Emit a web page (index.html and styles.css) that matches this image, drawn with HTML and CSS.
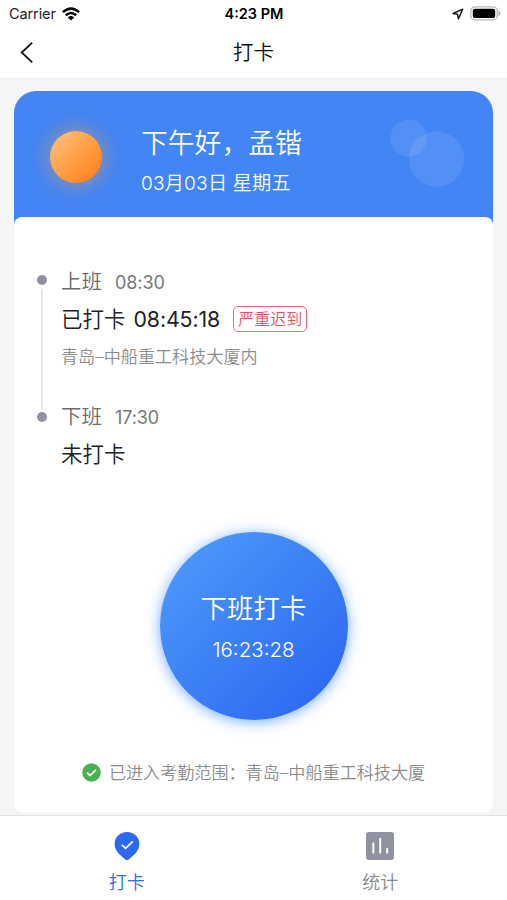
FILE: index.html
```html
<!DOCTYPE html>
<html lang="zh-CN">
<head>
<meta charset="utf-8">
<title>打卡</title>
<link rel="stylesheet" href="styles.css">
</head>
<body>
<div class="app">
  <header class="top">
    <div class="status">
      <div class="carrier"><span>Carrier</span>
        <svg width="18" height="14" viewBox="0 0 18 14"><g fill="none" stroke="#000" stroke-width="2.5"><path d="M.9 5.1Q9-1.9 17.1 5.1"/><path d="M3.8 8.2Q9 3.7 14.2 8.2"/></g><path d="M9 13.6 5.8 10.4Q9 7.8 12.2 10.4Z"/></svg>
      </div>
      <b class="clock">4:23 PM</b>
      <div class="indicators">
        <svg width="12" height="12" viewBox="0 0 12 12"><path d="M10.7 1.2 1 5.5l4.6.8.8 4.6Z" fill="none" stroke="#222" stroke-width="1.5" stroke-linejoin="round"/></svg>
        <svg width="31" height="15" viewBox="0 0 31 15"><rect x=".8" y=".8" width="26.4" height="13" rx="4" fill="#fff" stroke="#bbb" stroke-width="1.3"/><rect x="2.8" y="2.7" width="22.4" height="9.2" rx="2"/><path d="M28.5 5v5q2-.6 2-2.5t-2-2.5Z" fill="#aaa"/></svg>
      </div>
    </div>
    <div class="titlebar">
      <svg class="back" width="14" height="22" viewBox="0 0 14 22"><path d="M12.2 1.7 1.7 11.5l10.5 9.8" fill="none" stroke="#111" stroke-width="1.8"/></svg>
      <h1>打卡</h1>
    </div>
  </header>
  <main class="content">
    <section class="hero">
      <div class="sun"></div>
      <div class="greeting"><p class="hello">下午好，孟锴</p><p class="date">03月03日 星期五</p></div>
      <svg class="bubbles" width="76" height="68" viewBox="0 0 76 68" fill="#fff" fill-opacity=".09"><circle cx="18.5" cy="18" r="18.3"/><circle cx="46.5" cy="39" r="27.7"/></svg>
    </section>
    <section class="panel">
      <ol class="timeline">
        <li class="entry first">
          <div class="shift"><span>上班</span><span class="time">08:30</span></div>
          <div class="result"><span class="state">已打卡</span><span class="stamp">08:45:18</span><span class="tag">严重迟到</span></div>
          <div class="place">青岛–中船重工科技大厦内</div>
        </li>
        <li class="entry">
          <div class="shift"><span>下班</span><span class="time">17:30</span></div>
          <div class="result"><span class="state">未打卡</span></div>
        </li>
      </ol>
      <button class="punch"><span class="punch-name">下班打卡</span><span class="punch-time">16:23:28</span></button>
      <div class="range">
        <svg width="19" height="19" viewBox="0 0 19 19"><circle cx="9.5" cy="9.5" r="9.3" fill="#4caf50"/><path d="m5 9.6 3 3 6-5.8" fill="none" stroke="#fff" stroke-width="1.6"/></svg>
        <span>已进入考勤范围：青岛–中船重工科技大厦</span>
      </div>
    </section>
  </main>
  <nav class="tabs">
    <a class="tab active">
      <svg width="28" height="30" viewBox="0 0 28 30"><path d="M14 1C7 1 1.6 6.3 1.6 13c0 5 3.3 9 6.2 11.6l4.4 3.8q1.8 1.4 3.6 0l4.4-3.8C23 22 26.4 18 26.4 13 26.4 6.3 21 1 14 1Z" fill="#2d68ef"/><path d="m8.8 13.8 3.8 3.5 7.2-7" fill="none" stroke="#fff" stroke-width="1.7"/></svg>
      <span>打卡</span>
    </a>
    <a class="tab">
      <svg width="30" height="30" viewBox="0 0 30 30"><rect x="1" y="1" width="28" height="28" rx="3" fill="#9092a1"/><path d="M8.3 11.5v11M15.2 7v15.5M22.2 17v5.5" stroke="#fff" stroke-width="1.9"/></svg>
      <span>统计</span>
    </a>
  </nav>
</div>
</body>
</html>
```
FILE: styles.css
```css
* { box-sizing: border-box; margin: 0; padding: 0; }
body { font-family: Inter, "Noto Sans CJK SC", sans-serif; font-weight: 350; color: #222; background: #f5f5f5; }
svg { display: block; flex: none; }
.app { height: 900px; display: flex; flex-direction: column; overflow: hidden; }
.top { height: 79px; background: #fff; border-bottom: 1px solid #ededed; }
.status { height: 27px; display: grid; grid-template-columns: 1fr auto 1fr; align-items: center; padding: 0 8px 0 9px; font-size: 14.5px; font-weight: 400; }
.carrier { display: flex; align-items: center; gap: 6px; }
.carrier span { letter-spacing: -.1px; }
.clock { font-size: 14.5px; font-weight: 600; color: #000; }
.indicators { display: flex; align-items: center; justify-content: flex-end; gap: 6px; margin-right: -2px; }
.titlebar { height: 50px; display: grid; grid-template-columns: 1fr auto 1fr; align-items: center; padding: 0 20px; }
.titlebar h1 { grid-column: 2; padding-top: 2px; font-size: 20.5px; line-height: 30px; font-weight: 350; color: #111; }
.content { flex: 1; padding: 12px 14px 0; }
.hero { height: 132px; background: #4285f4; border-radius: 22px 22px 0 0; display: flex; padding: 0 27px 0 36px; }
.sun { width: 52px; height: 52px; margin: 40px 39px 0 0; flex: none; border-radius: 50%; background: linear-gradient(135deg, #ffc482, #ff7b0d); box-shadow: 0 0 22px rgba(255, 155, 65, .62); }
.greeting { color: #fff; white-space: nowrap; }
.hello { margin-top: 32px; font-size: 26.8px; line-height: 40px; }
.date { margin-top: 6px; font-size: 19.2px; line-height: 28px; letter-spacing: .15px; }
.bubbles { margin: 29px 0 0 auto; }
.panel { height: 595px; margin-top: -6px; background: #fff; border-radius: 8px; padding: 50px 23px 0; }
.timeline { list-style: none; }
.entry { position: relative; padding-left: 24px; height: 98px; }
.entry.first { height: 135px; }
.entry::before { content: ""; position: absolute; left: 0; top: 10px; width: 10px; height: 10px; border-radius: 50%; background: #9192a1; }
.entry.first::before { top: 8px; }
.entry.first::after { content: ""; position: absolute; left: 4px; top: 22px; width: 1.5px; height: 120px; background: #e8e8e8; }
.shift { display: flex; align-items: center; height: 30px; gap: 13px; font-size: 20.5px; line-height: 30px; color: #6c6c6c; }
.time { padding-top: 2px; font-size: 18px; font-weight: 400; color: #777; letter-spacing: -.1px; }
.result { display: flex; align-items: center; height: 36px; margin-top: 3px; color: #222; }
.state { padding-bottom: 2px; font-size: 21.5px; }
.stamp { padding-top: 1px; font-size: 21.3px; margin-left: 8px; font-weight: 400; letter-spacing: -.1px; }
.tag { margin: 2px 0 0 13px; width: 74px; height: 26px; border: 1.5px solid #ef6a6f; border-radius: 5px; color: #e95358; font-size: 16px; line-height: 24px; text-align: center; white-space: nowrap; }
.place { margin-top: 8px; font-size: 17.1px; line-height: 26px; color: #8c8c8c; }
.punch { display: flex; flex-direction: column; align-items: center; width: 188px; height: 188px; margin: 32px auto 0; padding-top: 56px; border: 0; border-radius: 50%; background: linear-gradient(135deg, #509dfb, #2863f0); box-shadow: 0 2px 14px rgba(45, 130, 255, .65); color: #fff; font: inherit; }
.punch-name { font-size: 26.5px; line-height: 40px; }
.punch-time { margin-top: 7px; font-size: 20.5px; line-height: 30px; }
.range { display: flex; align-items: center; justify-content: center; gap: 8px; margin-top: 39px; height: 26px; font-size: 17.1px; line-height: 26px; color: #8c8c8c; white-space: nowrap; }
.range span { padding-top: 2px; }
.tabs { height: 85px; display: flex; background: #fff; border-top: 1px solid #e3e3e3; }
.tab { flex: 1; display: flex; flex-direction: column; align-items: center; padding-top: 15px; color: #888; font-size: 18px; line-height: 26px; }
.tab span { margin-top: 9px; }
.tab.active { color: #2d68ef; }
```
